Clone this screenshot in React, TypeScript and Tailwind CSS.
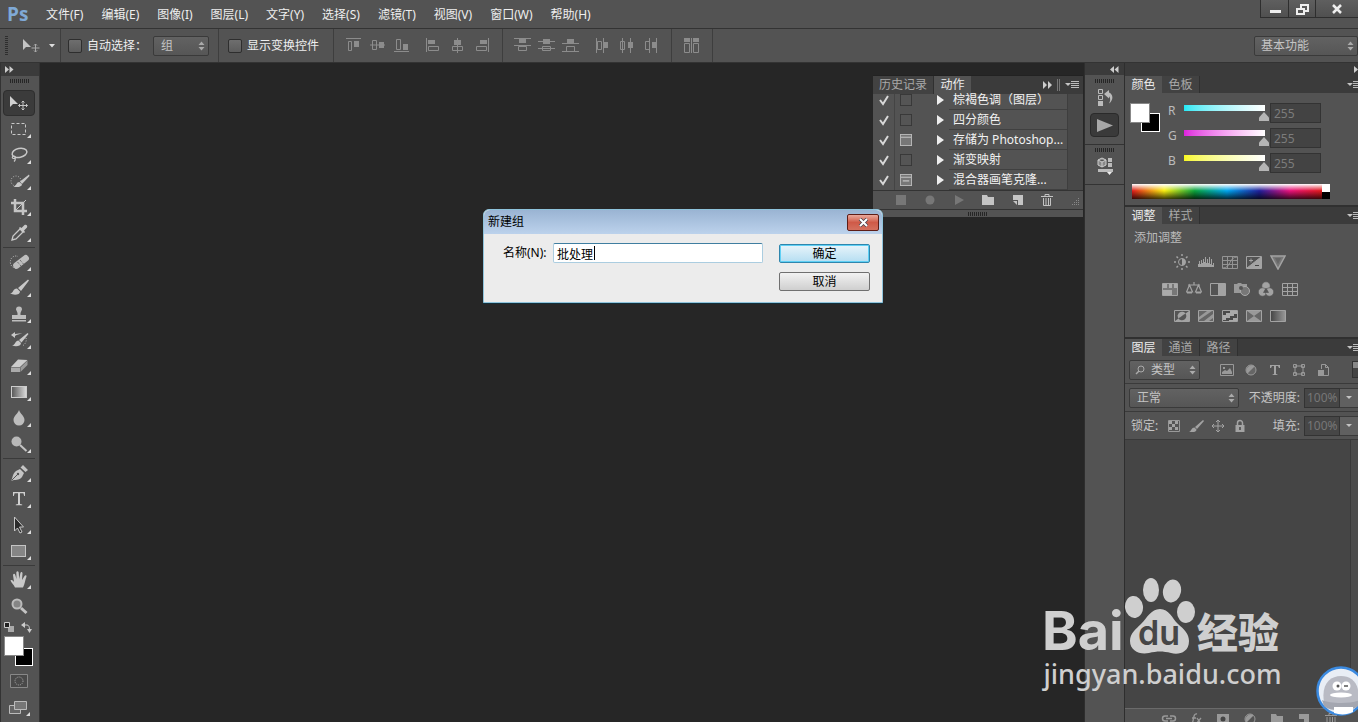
import type { ReactNode } from 'react'

const menus = [
  '文件(F)', '编辑(E)', '图像(I)', '图层(L)', '文字(Y)',
  '选择(S)', '滤镜(T)', '视图(V)', '窗口(W)', '帮助(H)',
]

const actions = [
  { name: '棕褐色调（图层）', box: 'empty' },
  { name: '四分颜色', box: 'empty' },
  { name: '存储为 Photoshop...', box: 'dialog' },
  { name: '渐变映射', box: 'empty' },
  { name: '混合器画笔克隆...', box: 'partial' },
]

const channels = [
  { name: 'R', bar: 'bg-linear-to-r from-[#1fe9f5] to-white' },
  { name: 'G', bar: 'bg-linear-to-r from-[#dd1fdd] to-white' },
  { name: 'B', bar: 'bg-linear-to-r from-[#f8f81a] to-white' },
]

type Tool = { name: string; icon: ReactNode; active?: boolean; single?: boolean }

const toolGroups: Tool[][] = [
  [
    {
      name: '移动工具',
      active: true,
      single: true,
      icon: (
        <>
          <path d="M2 4v11l3-3h5z" fill="#d0d0d0" />
          <path d="M15 9v9M10.500 13.500h9M13.500 10.500 15 9l1.500 1.500M13.500 16.500 15 18l1.500-1.500M12 12l-1.500 1.500L12 15M18 12l1.500 1.500L18 15" stroke="#c4c4c4" fill="none" />
        </>
      ),
    },
    { name: '矩形选框工具', icon: <rect x="3.500" y="5.500" width="14" height="11" fill="none" stroke="#c8c8c8" strokeDasharray="3 2" /> },
    {
      name: '套索工具',
      icon: (
        <g fill="none" stroke="#c8c8c8" strokeWidth="1.500">
          <ellipse cx="11.500" cy="9" rx="7.500" ry="4.500" transform="rotate(-12 11 9)" />
          <path d="M6 12c-2 0-2.500 2.500 0 2.500s1.500-2.500 0-2.500M6.500 14c1.500 1 .5 2.500-.5 3.500" strokeWidth="1.200" />
        </g>
      ),
    },
    {
      name: '快速选择工具',
      icon: (
        <>
          <circle cx="8" cy="11" r="5" fill="none" stroke="#bbb" strokeDasharray="1 1.500" />
          <path d="M21 4.500 12 11.500l2 2.500 7.500-8zM11.500 12c-3.500 0-2.500 3.500-6 4.500 3.500 1.500 8.500 0 8.500-2z" fill="#c8c8c8" />
        </>
      ),
    },
    { name: '裁剪工具', icon: <><path d="M7 3v12h12M3 7h12v12" fill="none" stroke="#c4c4c4" strokeWidth="2.500" /><path d="M7 15 18 4" stroke="#c4c4c4" /></> },
    {
      name: '吸管工具',
      icon: (
        <>
          <path d="m4 18 1-4 7-7 3 3-7 7z" fill="none" stroke="#c8c8c8" strokeWidth="1.300" />
          <path d="m11 6 5 5 1-1-1-1.500 3-3c1-2-1-3.500-2.500-2.500l-3 3L12 5z" fill="#c8c8c8" />
        </>
      ),
    },
  ],
  [
    {
      name: '污点修复画笔工具',
      icon: (
        <>
          <path d="M8 17a5.500 6 0 1 1 2-11.500" fill="none" stroke="#ccc" strokeDasharray="1 1.500" />
          <rect x="4" y="8" width="18" height="6.500" rx="3" transform="rotate(-38 12.500 11)" fill="#bdbdbd" />
          <path d="m9.500 11 3.500 4M12 9l3.500 4" stroke="#555" strokeDasharray="1 1" />
        </>
      ),
    },
    { name: '画笔工具', icon: <path d="M20 2.500 10 11l3 3L21 3.500zM9 11.500c-4.500 0-3 4.500-7 5 4 2 10 1.500 10-2z" fill="#c8c8c8" /> },
    { name: '仿制图章工具', icon: <path d="M9.500 10 8 6.500a3 3 0 1 1 6 0L12.500 10v2H18v4H4v-4h5.500zM4 17h14v1.500H4z" fill="#bdbdbd" /> },
    {
      name: '历史记录画笔工具',
      icon: (
        <>
          <path d="M19.500 4 11 11l2.500 2.500L20.500 5zM10.500 11.500c-3.500 0-3 4.500-6.500 5 3.500 1.500 9 1 9-2.500zM3 6l4-3v2c4-1 6-.5 7 0-3 0-5 .5-7 2v2z" fill="#c8c8c8" />
          <path d="M18 9c1 3-1 7-4 8" fill="none" stroke="#bbb" strokeDasharray="1 1.500" />
        </>
      ),
    },
    {
      name: '橡皮擦工具',
      icon: (
        <>
          <path d="M10 4.500 19.500 5 12 12H3z" fill="#cdcdcd" />
          <path d="M3 12.500h9v4.500H3z" fill="#aaa" />
          <path d="m12.500 12.500 7-7V10l-7 7z" fill="#999" />
        </>
      ),
    },
    {
      name: '渐变工具',
      icon: (
        <>
          <defs>
            <linearGradient id="tool-gradient"><stop stopColor="#555" /><stop offset="1" stopColor="#ddd" /></linearGradient>
          </defs>
          <rect x="3.500" y="5.500" width="15" height="11" fill="url(#tool-gradient)" stroke="#ccc" />
        </>
      ),
    },
    { name: '模糊工具', icon: <path d="M11 3c1 3.500 5.500 6 5.500 10a5.500 5.500 0 0 1-11 0c0-4 4.500-6.500 5.500-10z" fill="#bdbdbd" /> },
    { name: '减淡工具', icon: <><circle cx="8.500" cy="8.500" r="5" fill="#b8b8b8" /><path d="m12 12 6.500 6" stroke="#c4c4c4" strokeWidth="2" /></> },
  ],
  [
    {
      name: '钢笔工具',
      icon: (
        <>
          <path d="M3 19c2-3 1-7 5-10l4-2 4 4-2 4c-3 4-7 2-11 4zM12.500 5.500 15 3l5 5-2.500 2z" fill="#c4c4c4" />
          <path d="m3.500 18.500 6-6" stroke="#555" />
          <circle cx="10" cy="12" r="1.200" fill="#555" />
        </>
      ),
    },
    { name: '横排文字工具', icon: <path d="M5 4h12v4h-.8l-.8-2.700H12V16l2.200.6v.6H7.800v-.6L10 16V5.300H6.600L5.800 8H5z" fill="#d0d0d0" /> },
    { name: '路径选择工具', icon: <path d="M6.500 3v14l3-3 2.500 5 2-1-2.500-5h4z" fill="#2b2b2b" stroke="#c8c8c8" /> },
    { name: '矩形工具', icon: <rect x="3.500" y="5.500" width="14" height="11" fill="#858585" stroke="#c4c4c4" /> },
  ],
  [
    { name: '抓手工具', icon: <path d="M7 18.500c-1-3-4-5-4.500-7 1-1.200 2.500 0 3.500 1.500L5 6c.3-1.600 1.900-1.600 2.300 0l1.200 4-.2-6.500c.4-1.700 2-1.700 2.400 0l.5 6.500 1.200-6c.5-1.500 2.200-1.200 2.100.5L14 11l2.500-4c.9-1.300 2.200-.6 2 .6C17 11 17 15 15 18.500z" fill="#c8c8c8" /> },
    { name: '缩放工具', single: true, icon: <><circle cx="9" cy="9" r="4.500" fill="#858585" stroke="#bbb" strokeWidth="2" /><path d="m13 13 5.500 5" stroke="#c4c4c4" strokeWidth="3" /></> },
  ],
]

// each entry draws a line plus an outlined and a filled box
const alignGroups: { name: string; d: string; f: string }[][] = [
  [
    { name: '顶对齐', d: 'M1 1.500h15M3.500 4.500h3v9h-3z', f: 'M9 4h5v6H9z' },
    { name: '垂直居中对齐', d: 'M1 8h15M3.500 3.500h4v9h-4z', f: 'M10 5h5v6h-5z' },
    { name: '底对齐', d: 'M1 14.500h15M3.500 2.500h4v10h-4z', f: 'M10 7h5v6h-5z' },
  ],
  [
    { name: '左对齐', d: 'M1.500 1v14M3.500 9.500h10v4h-10z', f: 'M3 3h7v4H3z' },
    { name: '水平居中对齐', d: 'M8.500 1v15M3.500 9.500h10v4h-10z', f: 'M5 3h7v5H5z' },
    { name: '右对齐', d: 'M15.500 1v14M3.500 9.500h10v4h-10z', f: 'M7 3h7v4H7z' },
  ],
  [
    { name: '按顶分布', d: 'M0 1.500h17M0 8.500h17M4.500 9.500h8v4h-8z', f: 'M5 2h7v4H5z' },
    { name: '垂直居中分布', d: 'M0 4.500h17M0 11.500h17M4.500 9.500h8v4h-8z', f: 'M5 2h7v5H5z' },
    { name: '按底分布', d: 'M0 6.500h17M0 14.500h17M4.500 9.500h8v5h-8z', f: 'M5 2h7v4H5z' },
  ],
  [
    { name: '按左分布', d: 'M2.500 1v15M9.500 1v15M3.500 4.500h4v8h-4z', f: 'M10 5h4v6h-4z' },
    { name: '水平居中分布', d: 'M4.500 1v15M12.500 1v15M2.500 4.500h4v8h-4z', f: 'M10 5h5v6h-5z' },
    { name: '按右分布', d: 'M7.500 1v15M14.500 1v15M3.500 4.500h4v8h-4z', f: 'M10 5h4v6h-4z' },
  ],
  [{ name: '自动对齐图层', d: 'M8.500 1v15M1.500 6.500h5v9h-5zM10.500 6.500h5v9h-5z', f: 'M1 1h6v4H1zM10 1h6v4h-6z' }],
]

const adjustRows: { name: string; icon: ReactNode }[][] = [
  [
    {
      name: '亮度/对比度',
      icon: (
        <>
          <circle cx="8" cy="8" r="3.500" fill="none" stroke="#a3a3a3" />
          <path d="M8 4.500a3.500 3.500 0 0 1 0 7z" fill="#a3a3a3" />
          <path d="M8 0v2M8 14v2M0 8h2M14 8h2M2.500 2.500 4 4M12 12l1.500 1.500M13.500 2.500 12 4M4 12l-1.500 1.500" stroke="#a3a3a3" strokeWidth="1.500" />
        </>
      ),
    },
    { name: '色阶', icon: <path d="M0 13h16v-4h-1v2h-1V5h-1v5h-1V3h-1v6h-1V5H9v4H8V3H7v5H6V5H5v4H4V6H3v4H2V7H1v3H0z" fill="#a3a3a3" /> },
    { name: '曲线', icon: <path d="M.5 2.500h15v12H.5zM0 6.500h16M0 10.500h16M5.500 2v12M10.500 2v12M1 14c8 0 6-11 14-11" fill="none" stroke="#949494" /> },
    { name: '曝光度', icon: <><path d="M.5 2.500h15v12H.5z" fill="none" stroke="#a3a3a3" /><path d="M1 14 15 3v11zM3 6.500h4M5 4.500v4" fill="#a3a3a3" stroke="#a3a3a3" /><path d="M9 11.500h4" stroke="#444" /></> },
    { name: '自然饱和度', icon: <><path d="M1 2h14L8 15z" fill="#777" stroke="#a3a3a3" strokeWidth="1.500" /><path d="M5 4h6l-3 6z" fill="#666" /></> },
  ],
  [
    { name: '色相/饱和度', icon: <><path d="M.5 2.500h15v12H.5z" fill="#777" stroke="#a3a3a3" /><path d="M1 3h4v4H1zM7 3h3v4H7zM12 3h3v4h-3zM1 9h9v5H1z" fill="#aaa" /></> },
    { name: '色彩平衡', icon: <path d="M8 1v3M2 4h12M3.500 4l-3 7h6zM12.500 4l-3 7h6zM1 12h5M10 12h5" fill="none" stroke="#a3a3a3" strokeWidth="1.200" /> },
    { name: '黑白', icon: <><path d="M.5 2.500h15v12H.5z" fill="none" stroke="#a3a3a3" /><path d="M8 3h7v11H8z" fill="#a3a3a3" /></> },
    { name: '照片滤镜', icon: <><path d="M0 3h3l1-1h3l1 1h5v9H0z" fill="#999" /><circle cx="11" cy="10" r="4.500" fill="#777" stroke="#aaa" /><circle cx="7" cy="7" r="2" fill="#555" /></> },
    { name: '通道混合器', icon: <g fill="#a3a3a3" stroke="#535353" strokeWidth=".6"><circle cx="8" cy="5" r="4.200" /><circle cx="4.500" cy="11" r="4.200" /><circle cx="11.500" cy="11" r="4.200" /><path d="m8 7-2.500 4.500h5z" fill="#555" /></g> },
    { name: '颜色查找', icon: <path d="M.5 2.500h15v12H.5zM0 6.500h16M0 10.500h16M5.500 2v12M10.500 2v12" fill="none" stroke="#a3a3a3" /> },
  ],
  [
    { name: '反相', icon: <><path d="M.5 2.500h15v11H.5z" fill="#555" stroke="#a3a3a3" /><path d="M1 13 15 3v10z" fill="#a3a3a3" /><path d="M4.500 10.500a4 4 0 0 1 7-5z" fill="#a3a3a3" /><path d="M4.500 10.500a4 4 0 0 0 7-5z" fill="#555" /></> },
    { name: '色调分离', icon: <><path d="M.5 2.500h15v11H.5z" fill="#666" stroke="#a3a3a3" /><path d="M1 9 9 3h5L1 12zM6 13l9-7v4l-4 3z" fill="#999" /></> },
    { name: '阈值', icon: <><path d="M.5 2.500h15v11H.5z" fill="#4a4a4a" stroke="#a3a3a3" /><path d="M1 7h3V5h4V3h7v3h-3v2H8v2H4v2H1zM7 13v-1h4v-2h4v3z" fill="#aaa" /></> },
    { name: '可选颜色', icon: <><path d="M.5 2.500h15v11H.5z" fill="#666" stroke="#a3a3a3" /><path d="M1 3h14L8 8zM1 13h14L8 8z" fill="#999" /></> },
    {
      name: '渐变映射',
      icon: (
        <>
          <defs>
            <linearGradient id="map-gradient"><stop stopColor="#444" /><stop offset="1" stopColor="#999" /></linearGradient>
          </defs>
          <path d="M.5 2.500h15v11H.5z" fill="url(#map-gradient)" stroke="#a3a3a3" />
        </>
      ),
    },
  ],
]

const filters = [
  { name: '像素图层', icon: <><path d="M1.500 2.500h13v11h-13z" fill="none" stroke="#999" /><path d="M3 12v-2l3-2 2 1 3-3 2 4v2zM4 5h2v2H4z" fill="#999" /></> },
  { name: '调整图层', icon: <><circle cx="8" cy="8" r="5" fill="#666" stroke="#999" /><path d="M4.500 11.500a5 5 0 0 1 7-7z" fill="#999" /></> },
  { name: '文字图层', icon: <path d="M3 3h10v3h-1l-1-2H9v8l1.500.5v.5h-5v-.5L7 12V4H5L4 6H3z" fill="#a3a3a3" /> },
  { name: '形状图层', icon: <path d="M4 4h8v8H4zM2.500 2.500h3v3h-3zM10.500 2.500h3v3h-3zM2.500 10.500h3v3h-3zM10.500 10.500h3v3h-3z" fill="#535353" stroke="#999" /> },
  { name: '智能对象', icon: <><path d="M6.500 7V2.500h4l3 3v8H9M10.500 2.500v3h3" fill="none" stroke="#999" /><path d="M3 8h6v6H3z" fill="#999" /></> },
]

const locks = [
  { name: '锁定透明像素', icon: <><path d="M2.500 2.500h11v11h-11z" fill="#555" stroke="#999" /><path d="M3 3h3v3H3zM9 3h3v3H9zM6 6h3v3H6zM3 9h3v3H3zM9 9h3v3H9z" fill="#a3a3a3" /></> },
  { name: '锁定图像像素', icon: <path d="M15 2 7 9l2 2 7-8zM6.500 9.500C3 9.500 4 13 1 13.500c3 1 7.500 1 7.500-2z" fill="#a3a3a3" /> },
  { name: '锁定位置', icon: <path d="M8 2v12M2 8h12M6 4l2-2 2 2M6 12l2 2 2-2M4 6 2 8l2 2M12 6l2 2-2 2" fill="none" stroke="#a3a3a3" /> },
  { name: '锁定全部', icon: <><path d="M3.500 7h9v7h-9z" fill="#a3a3a3" /><path d="M5.500 7V5a2.500 2.500 0 0 1 5 0v2" fill="none" stroke="#a3a3a3" strokeWidth="1.500" /><path d="M8 9v3" stroke="#444" strokeWidth="1.500" /></> },
]

const layerButtons = [
  { name: '链接图层', icon: <path d="M7 5H4a2.500 2.500 0 0 0 0 5h3M9 5h3a2.500 2.500 0 0 1 0 5H9M5 7.500h6" fill="none" stroke="#999" strokeWidth="1.500" /> },
  { name: '添加图层样式', icon: <path d="M9 3c-4-1-3 6-5 10M4 7h4M9 7l4 6M13 7l-5 6" fill="none" stroke="#999" strokeWidth="1.300" /> },
  { name: '添加蒙版', icon: <><path d="M2 3h12v10H2z" fill="#999" /><circle cx="8" cy="8" r="2.500" fill="#444" /></> },
  { name: '新建调整图层', icon: <><circle cx="8" cy="8" r="5" fill="none" stroke="#999" /><path d="M4.500 11.500a5 5 0 0 1 7-7z" fill="#999" /></> },
  { name: '新建组', icon: <path d="M2 3h5l1 2h6v8H2z" fill="#999" /> },
  { name: '新建图层', icon: <path d="M3 3h10v10H8V8H3z" fill="#999" /> },
  { name: '删除图层', icon: <path d="M2 4.500h12M6 4V2.500h4V4M4 6v8h8V6M7 6v7M9.500 6v7" fill="none" stroke="#999" /> },
]

const actionButtons = [
  { name: '停止', icon: <path d="M3 3h10v10H3z" fill="#777" /> },
  { name: '开始记录', icon: <circle cx="8" cy="8" r="4.500" fill="#777" /> },
  { name: '播放', icon: <path d="m4 3 9 5-9 5z" fill="#777" /> },
  { name: '新建动作组', icon: <path d="M2 3h5l1 2h6v8H2z" fill="#c4c4c4" /> },
  { name: '新建动作', icon: <path d="M4 3h10v10H9V8H4zM4 9h4v4z" fill="#c4c4c4" /> },
  { name: '删除动作', icon: <path d="M3 4.500h12M7 4V2.500h4V4M5.500 6v7.500h7V6M8 6v7M10.500 6v7" fill="none" stroke="#c4c4c4" /> },
]

function Icon({ children, className = 'size-4', box = '0 0 16 16' }: { children: ReactNode; className?: string; box?: string }) {
  return <svg viewBox={box} className={`block shrink-0 ${className}`} aria-hidden="true">{children}</svg>
}

function Grip() {
  return <div className="h-1 w-5 shrink-0 bg-[repeating-linear-gradient(90deg,#262626_0_1px,transparent_1px_2px)]" />
}

function PanelMenu() {
  return (
    <Icon className="h-3 w-4" box="0 0 16 12">
      <path d="M1 4h6L4 7z" fill="#c4c4c4" />
      <path d="M7 2.500h8M7 4.500h8M7 6.500h8M7 8.500h8" stroke="#bbb" />
    </Icon>
  )
}

function Dropdown({ label, value, className, textClass }: { label: string; value: string; className: string; textClass: string }) {
  return (
    <div className={`relative h-5 shrink-0 ${className}`}>
      <select aria-label={label} className={`block h-full w-full appearance-none rounded-xs border border-[#3a3a3a] bg-linear-to-b from-[#626262] to-[#565656] text-xs leading-4 text-[#c4c4c4] ${textClass}`}>
        <option>{value}</option>
      </select>
      <svg viewBox="0 0 7 10" className="pointer-events-none absolute top-[5px] right-1 h-[10px] w-[7px]" aria-hidden="true">
        <path d="M.5 4h6l-3-3.500zM.5 6h6l-3 3.500z" fill="#aaa" />
      </svg>
    </div>
  )
}

function PanelTabs({ tabs }: { tabs: string[] }) {
  return (
    <div className="flex h-[17px] shrink-0 bg-[#3b3b3b]">
      {tabs.map((tab, i) => (
        <button
          key={tab}
          className={
            i === 0
              ? 'w-[37px] bg-[#535353] text-xs leading-4 text-[#ececec]'
              : 'w-[38px] border-r border-[#303030] bg-[#424242] text-xs leading-4 text-[#a8a8a8]'
          }
        >
          {tab}
        </button>
      ))}
      <button aria-label="面板菜单" className="-mr-1 ml-auto flex items-center"><PanelMenu /></button>
    </div>
  )
}

function Percent({ label }: { label: string }) {
  return (
    <>
      <label htmlFor={label} className="ml-auto text-xs leading-5 text-[#c4c4c4]">{label}:</label>
      <input id={label} defaultValue="100%" className="ml-1 h-5 w-9 shrink-0 border border-[#333] bg-[#464646] pl-[2px] text-xs text-[#777]" />
      <button aria-label={`${label}滑块`} className="flex h-5 w-[18px] shrink-0 items-center justify-center border-y border-[#3a3a3a] bg-[#606060]">
        <Icon className="h-1 w-2" box="0 0 8 4"><path d="M1 0h6L4 3z" fill="#c4c4c4" /></Icon>
      </button>
    </>
  )
}

function MenuBar() {
  return (
    <header className="flex h-7 shrink-0 items-center bg-[#535353] pl-[7px]">
      <span className="w-[39px] font-['Open_Sans',sans-serif] text-[19px] leading-6 font-bold text-[#7fa9d6]">Ps</span>
      <nav className="flex gap-[18px] pt-[2px]">
        {menus.map((m) => (
          <button key={m} className="text-xs leading-5 whitespace-nowrap text-[#eee]">{m}</button>
        ))}
      </nav>
      <div className="ml-auto flex h-[18px] self-start border-b border-l border-[#2e2e2e] bg-linear-to-b from-[#5f5f5f] to-[#505050]">
        <button aria-label="最小化" className="flex w-7 items-center justify-center border-r border-[#2e2e2e]">
          <Icon className="size-3" box="0 0 12 12"><path d="M1 7h11v3H1z" fill="#eee" /></Icon>
        </button>
        <button aria-label="还原" className="flex w-[27px] items-center justify-center border-r border-[#2e2e2e]">
          <Icon className="h-3 w-[13px]" box="0 0 13 12"><path d="M5 6V2h7v6H8M1 6h7v5H1z" fill="none" stroke="#eee" strokeWidth="2" /></Icon>
        </button>
        <button aria-label="关闭" className="flex w-[42px] items-center justify-center">
          <Icon className="h-[10px] w-3" box="0 0 12 10"><path d="m2 1 8 8M10 1 2 9" stroke="#eee" strokeWidth="2.500" /></Icon>
        </button>
      </div>
    </header>
  )
}

function OptionsBar() {
  const checkbox = 'size-[14px] shrink-0 appearance-none rounded-xs border border-[#2e2e2e] bg-linear-to-b from-[#6e6e6e] to-[#5c5c5c]'
  return (
    <div className="flex h-[35px] shrink-0 items-center border-t border-b border-[#333] bg-[#535353]">
      <div className="ml-[5px] h-5 w-[3px] bg-[repeating-linear-gradient(180deg,#2e2e2e_0_1px,transparent_1px_2px)]" />
      <button aria-label="移动工具预设" className="ml-3 flex w-9 items-center">
        <Icon className="size-[22px]" box="0 0 22 22">
          <path d="M3 4v11l3-3h5z" fill="#c4c4c4" />
          <path d="M15.500 9v8M11.500 13h8M14 10.500 15.500 9l1.500 1.500M14 15.500l1.500 1.500 1.500-1.500" stroke="#aaa" fill="none" />
        </Icon>
        <Icon className="ml-auto h-1 w-2" box="0 0 8 4"><path d="M1 0h6L4 3.500z" fill="#ddd" /></Icon>
      </button>
      <div className="ml-1 h-full w-px bg-[#3e3e3e]" />
      <label className="ml-[7px] flex w-[85px] items-center gap-[5px] text-xs leading-5 whitespace-nowrap text-[#eee]">
        <input type="checkbox" className={checkbox} />自动选择：
      </label>
      <Dropdown label="自动选择对象" value="组" className="w-14" textClass="pl-[7px]" />
      <div className="ml-[9px] h-full w-px bg-[#3e3e3e]" />
      <label className="ml-[9px] flex w-[105px] items-center gap-[5px] text-xs leading-5 whitespace-nowrap text-[#eee]">
        <input type="checkbox" className={checkbox} />显示变换控件
      </label>
      <div className="h-full w-px bg-[#3e3e3e]" />
      {alignGroups.map((group, i) => (
        <div key={i} className={`flex h-full items-center pl-[7px] ${i === 1 || i === 3 || i === 4 ? 'border-r border-[#3e3e3e] pr-[9px]' : 'pr-px'}`}>
          {group.map((a) => (
            <button key={a.name} aria-label={a.name} className="flex w-6 justify-center">
              <Icon className="size-[17px]" box="0 0 17 17">
                <path d={a.d} fill="none" stroke="#8c8c8c" />
                <path d={a.f} fill="#8c8c8c" />
              </Icon>
            </button>
          ))}
        </div>
      ))}
      <div className="ml-auto">
        <Dropdown label="工作区" value="基本功能" className="w-[104px]" textClass="pl-[6px]" />
      </div>
    </div>
  )
}

function Toolbar() {
  return (
    <aside className="flex w-10 shrink-0 flex-col border-x border-[#333] bg-[#535353]">
      <div className="flex h-[13px] shrink-0 items-center bg-[#3b3b3b] pl-1">
        <Icon className="h-[7px] w-[9px]" box="0 0 9 7"><path d="m0 0 4 3.500L0 7zM4.500 0l4 3.500-4 3.500z" fill="#ccc" /></Icon>
      </div>
      <div className="flex h-[14px] shrink-0 justify-center pt-[3px]"><Grip /></div>
      {toolGroups.map((group, i) => (
        <div key={i} className={`mr-1 ml-[2px] shrink-0 ${i > 0 ? 'mt-px border-t border-[#3a3a3a] pt-px' : ''}`}>
          {group.map((tool) => (
            <button
              key={tool.name}
              aria-label={tool.name}
              className={`relative flex h-[26px] w-full items-center justify-center ${tool.active ? 'rounded-sm border border-[#2e2e2e] bg-[#3b3b3b]' : ''}`}
            >
              <Icon className="size-[22px]" box="0 0 22 22">{tool.icon}</Icon>
              {!tool.single && (
                <svg viewBox="0 0 4 4" className="absolute right-1 bottom-1 size-1" aria-hidden="true"><path d="M4 0v4H0z" fill="#ddd" /></svg>
              )}
            </button>
          ))}
        </div>
      ))}
      <div className="flex h-4 shrink-0 items-center justify-between px-[3px]">
        <Icon className="size-[10px]" box="0 0 10 10"><path d="M4 4h6v6H4z" fill="#aaa" /><path d="M.5.5h5v5h-5z" fill="#222" stroke="#ccc" /></Icon>
        <Icon className="mr-1 size-[11px]" box="0 0 11 11"><path d="M4 0v6L0 3zM6 7h5l-2.500 4z" fill="#ccc" /><path d="M3 3h3q2.500 0 2.500 5" fill="none" stroke="#ccc" /></Icon>
      </div>
      <div className="relative mx-[3px] mt-px h-[30px] shrink-0">
        <button aria-label="背景色" className="absolute right-[3px] bottom-0 size-[18px] border border-white bg-black" />
        <button aria-label="前景色" className="absolute top-0 left-0 size-5 border border-[#888] bg-white" />
      </div>
      <button aria-label="以快速蒙版模式编辑" className="mt-[6px] mr-1 ml-[2px] flex h-[18px] shrink-0 items-center justify-center">
        <Icon className="h-[14px] w-[18px]" box="0 0 18 14">
          <path d="M.5.5h17v13H.5z" fill="#494949" stroke="#888" />
          <circle cx="9" cy="7" r="4" fill="none" stroke="#aaa" strokeDasharray="1 1" />
        </Icon>
      </button>
      <button aria-label="更改屏幕模式" className="mt-2 mr-1 ml-[2px] flex h-5 shrink-0 items-center justify-center">
        <Icon className="h-4 w-[22px]" box="0 0 22 16">
          <path d="M1.500 5.500h11v8h-11z" fill="#666" stroke="#bbb" />
          <path d="M6.500 1.500h12v8h-12z" fill="#777" stroke="#bbb" />
          <path d="M22 12v4h-4z" fill="#ddd" />
        </Icon>
      </button>
    </aside>
  )
}

function ActionsPanel() {
  return (
    <section className="absolute top-3 right-px w-[210px] border-t border-[#222] bg-[#535353]">
      <div className="flex h-[18px] items-center bg-[#3b3b3b] text-xs leading-4">
        <button className="h-full w-[61px] border-r border-[#303030] bg-[#424242] text-[#a8a8a8]">历史记录</button>
        <button className="h-full w-[37px] bg-[#535353] text-[#ececec]">动作</button>
        <Icon className="ml-auto h-2 w-[10px]" box="0 0 10 8"><path d="m0 0 4 4-4 4zM5 0l4 4-4 4z" fill="#ccc" /></Icon>
        <div className="mx-1 h-3 w-[3px] border-x border-[#777]" />
        <button aria-label="面板菜单" className="pr-[3px]"><PanelMenu /></button>
      </div>
      <div className="flex h-[97px] border-b border-[#333]">
        <ul className="w-[194px]">
          {actions.map((a, i) => {
            // the list is scrolled, so the first row is shorter than the rest
            const pad = i === 0 ? 'pb-1' : ''
            return (
              <li key={a.name} className={`flex ${i === 0 ? 'h-4' : 'h-5'}`}>
                <span className={`flex w-[22px] items-center justify-center border-r border-[#444] ${pad}`}>
                  <Icon className="size-3" box="0 0 12 12"><path d="m2 6 3 4 5-8" fill="none" stroke="#d8d8d8" strokeWidth="2" /></Icon>
                </span>
                <span className={`flex w-[22px] items-center justify-center ${pad}`}>
                  <Icon className="size-3" box="0 0 13 13">
                    <rect x=".5" y=".5" width="12" height="12" fill={a.box === 'empty' ? '#555' : '#777'} stroke={a.box === 'empty' ? '#383838' : '#bbb'} />
                    {a.box !== 'empty' && <path d="M1 3.500h11" stroke="#ccc" />}
                    {a.box === 'partial' && <path d="M3 7.500h7" stroke="#ddd" />}
                  </Icon>
                </span>
                <span className={`ml-5 flex items-center ${pad}`}>
                  <Icon className="h-[10px] w-[7px]" box="0 0 7 10"><path d="m0 0 7 5-7 5z" fill="#eee" /></Icon>
                </span>
                <span className={`ml-[5px] flex-1 border-b border-[#404040] pl-1 text-xs whitespace-nowrap text-[#f2f2f2] ${i === 0 ? 'leading-3' : 'leading-5'}`}>{a.name}</span>
              </li>
            )
          })}
        </ul>
        <div className="flex-1 border-l border-[#3e3e3e] bg-[#484848]" />
      </div>
      <div className="relative flex h-[18px] items-center gap-[13px] pl-5">
        {actionButtons.map((b) => (
          <button key={b.name} aria-label={b.name}><Icon>{b.icon}</Icon></button>
        ))}
        <svg viewBox="0 0 8 8" className="absolute right-1 bottom-1 size-2" aria-hidden="true">
          <path d="M1 7.500h7M3 5.500h5M5 3.500h3M7 1.500h1" stroke="#888" strokeDasharray="1 1" />
        </svg>
      </div>
      <div className="flex h-2 items-center justify-center border-t border-[#333]"><Grip /></div>
    </section>
  )
}

function NewSetDialog() {
  const button = 'h-[19px] w-[91px] rounded-xs pt-px text-xs leading-4 text-black'
  return (
    <form
      role="dialog"
      aria-label="新建组"
      className="absolute top-[146px] left-[443px] h-[94px] w-[400px] rounded-t-md border border-[#8fc4dc] bg-[#ececec] shadow-[0_1px_0_#12303c]"
    >
      <div className="flex h-6 items-center justify-between rounded-t-md bg-linear-to-b from-[#9ab4d3] to-[#bcd2ec] pr-[3px] pl-1">
        <h2 className="text-xs leading-5 text-black">新建组</h2>
        <button type="button" aria-label="关闭" className="flex h-[17px] w-8 items-center justify-center rounded-xs border border-[#5e1d17] bg-linear-to-b from-[#e9a89c] via-[#cf5a48] to-[#d4705e]">
          <Icon className="h-[9px] w-[11px]" box="0 0 11 9"><path d="m2 1 7 7M9 1 2 8" stroke="#45424f" strokeWidth="3.500" /><path d="m2 1 7 7M9 1 2 8" stroke="#fff" strokeWidth="2" /></Icon>
        </button>
      </div>
      <div className="flex items-start pt-[9px] pl-[19px]">
        <label htmlFor="set-name" className="w-[50px] text-xs leading-5 whitespace-nowrap text-black">名称(N):</label>
        <div className="relative">
          <input id="set-name" defaultValue="批处理" className="block h-5 w-[210px] rounded-xs border border-[#abcde0] border-t-[#3f7ea0] bg-white px-[3px] pt-px text-xs text-black caret-transparent outline-none" />
          <span className="absolute top-[3px] left-[41px] h-[14px] w-px bg-black" />
        </div>
        <div className="ml-4 flex flex-col gap-[9px] pt-px">
          <button type="submit" className={`${button} border border-[#2f86ad] bg-linear-to-b from-[#e8f4fa] to-[#b5def2] shadow-[inset_0_0_0_1px_#5fd0f5]`}>确定</button>
          <button type="button" className={`${button} border border-[#707070] bg-linear-to-b from-[#f2f2f2] to-[#cfcfcf]`}>取消</button>
        </div>
      </div>
    </form>
  )
}

function IconDock() {
  return (
    <aside className="w-[41px] shrink-0 border-x border-[#2e2e2e] bg-[#535353]">
      <div className="flex h-3 items-center justify-end bg-[#3b3b3b] pr-[5px]">
        <Icon className="h-[7px] w-[9px]" box="0 0 9 7"><path d="M4 0 0 3.500 4 7zM8.500 0l-4 3.500 4 3.500z" fill="#ccc" /></Icon>
      </div>
      <div className="flex h-[70px] flex-col items-center gap-px border-b border-[#333] pt-1">
        <Grip />
        <button aria-label="历史记录" className="p-1">
          <Icon className="h-5 w-4" box="0 0 16 20">
            <path d="M1.500 1.500h4v4h-4zM1.500 7.500h4v4h-4z" fill="none" stroke="#bbb" />
            <path d="M1 13h5v5H1zM7 6l5-4v2.500c4 1.500 5 7 0 11 2-4 1-6.500 0-7v2z" fill="#bbb" />
          </Icon>
        </button>
        <button aria-label="动作" className="flex h-6 w-[29px] shrink-0 items-center justify-center rounded-sm border border-[#2a2a2a] bg-[#3a3a3a]">
          <Icon className="h-[13px] w-4" box="0 0 16 13"><path d="m0 0 16 6.500L0 13z" fill="#a8a8a8" /></Icon>
        </button>
      </div>
      <div className="flex h-10 flex-col items-center border-b border-[#333] pt-[3px]">
        <Grip />
        <button aria-label="属性" className="p-[5px]">
          <Icon className="h-[18px] w-4" box="0 0 16 18">
            <path d="m5 1 4 2v5l-4 2-4-2V3zM1 3l4 2 4-2M5 5v5" fill="#888" stroke="#ccc" />
            <path d="M11 1h4v4h-4zM11 6h4v4h-4zM1 12h15v3H1z" fill="#bbb" />
            <path d="M10 15h5l-2.500 3z" fill="#eee" />
          </Icon>
        </button>
      </div>
    </aside>
  )
}

function ColorPanel() {
  return (
    <section className="h-[129px] shrink-0">
      <PanelTabs tabs={['颜色', '色板']} />
      <div className="flex pt-[10px] pl-[5px]">
        <div className="relative h-[30px] w-[38px]">
          <button aria-label="背景色" className="absolute top-[10px] left-[11px] size-[19px] border border-white bg-black" />
          <button aria-label="前景色" className="absolute top-0 left-0 size-5 border border-[#888] bg-white" />
        </div>
        <div className="flex flex-col gap-1">
          {channels.map((c) => (
            <div key={c.name} className="flex h-[21px]">
              <label htmlFor={`range-${c.name}`} className="w-3 text-xs leading-4 text-[#bbb]">{c.name}</label>
              <div className="mt-[2px] w-[89px]">
                <div className={`mx-1 h-[6px] ${c.bar}`} />
                <input
                  id={`range-${c.name}`}
                  type="range"
                  min={0}
                  max={255}
                  defaultValue={255}
                  className="mt-px block h-[9px] w-full appearance-none bg-transparent [&::-webkit-slider-thumb]:h-[9px] [&::-webkit-slider-thumb]:w-[10px] [&::-webkit-slider-thumb]:appearance-none [&::-webkit-slider-thumb]:bg-[#b5b5b5] [&::-webkit-slider-thumb]:[clip-path:polygon(50%_0,100%_60%,100%_100%,0_100%,0_60%)]"
                />
              </div>
              <input aria-label={`${c.name} 值`} defaultValue="255" className="ml-px h-5 w-[51px] border border-[#333] bg-[#434343] px-[3px] text-xs text-[#7c7c7c]" />
            </div>
          ))}
        </div>
      </div>
      <div className="mt-[10px] ml-[7px] flex h-[15px] w-[198px]">
        <div className="flex-1 bg-[linear-gradient(180deg,#fff_0%,transparent_45%,rgba(0,0,0,0.75)_100%),linear-gradient(90deg,#e01b1b_0%,#f8ee10_17%,#0aa33c_33%,#00a5ee_50%,#20209a_67%,#e8127c_83%,#e01b1b_100%)]" />
        <div className="w-2 bg-linear-to-b from-white from-50% to-black to-50%" />
      </div>
    </section>
  )
}

function AdjustPanel() {
  return (
    <section className="h-[132px] shrink-0 border-t-2 border-[#303030]">
      <PanelTabs tabs={['调整', '样式']} />
      <p className="px-[9px] pt-1 text-xs leading-5 text-[#bbb]">添加调整</p>
      <div className="mt-[6px] flex w-[210px] flex-col gap-[11px]">
        {adjustRows.map((row, i) => (
          <div key={i} className="flex justify-center gap-2">
            {row.map((a) => (
              <button key={a.name} aria-label={a.name}><Icon>{a.icon}</Icon></button>
            ))}
          </div>
        ))}
      </div>
    </section>
  )
}

function LayersPanel() {
  return (
    <section className="flex min-h-0 flex-1 flex-col border-t-2 border-[#303030]">
      <PanelTabs tabs={['图层', '通道', '路径']} />
      <div className="flex h-7 shrink-0 items-center border-b border-[#3a3a3a] pl-1">
        <div className="relative">
          <Dropdown label="图层过滤" value="类型" className="w-[71px]" textClass="pl-[21px]" />
          <svg viewBox="0 0 10 10" className="absolute top-[5px] left-[6px] size-[10px]" aria-hidden="true">
            <circle cx="6" cy="4" r="3" fill="none" stroke="#aaa" /><path d="M4 6 1 9" stroke="#aaa" strokeWidth="1.500" />
          </svg>
        </div>
        <div className="ml-[19px] flex gap-2">
          {filters.map((f) => (
            <button key={f.name} aria-label={f.name}><Icon>{f.icon}</Icon></button>
          ))}
        </div>
        <button aria-label="打开或关闭图层过滤" className="ml-auto h-[17px] w-[6px] border border-r-0 border-[#333] bg-linear-to-b from-[#888] from-40% to-[#444] to-40%" />
      </div>
      <div className="flex h-7 shrink-0 items-center border-b border-[#3a3a3a] pl-1">
        <Dropdown label="混合模式" value="正常" className="w-[110px]" textClass="pl-[7px]" />
        <Percent label="不透明度" />
      </div>
      <div className="flex h-7 shrink-0 items-center border-b border-[#3a3a3a] pl-[6px]">
        <span className="text-xs leading-5 text-[#c4c4c4]">锁定:</span>
        <div className="ml-2 flex gap-[6px]">
          {locks.map((l) => (
            <button key={l.name} aria-label={l.name}><Icon>{l.icon}</Icon></button>
          ))}
        </div>
        <Percent label="填充" />
      </div>
      <div className="flex min-h-0 flex-1 bg-[#454545]">
        <div className="ml-auto w-2 border-l border-[#3a3a3a] bg-[#4c4c4c]" />
      </div>
      <div className="flex h-[14px] shrink-0 gap-[11px] overflow-hidden border-t border-[#6a6a6a] pt-[2px] pl-9">
        {layerButtons.map((b) => (
          <button key={b.name} aria-label={b.name} className="h-4"><Icon>{b.icon}</Icon></button>
        ))}
      </div>
    </section>
  )
}

function Watermark() {
  return (
    <div className="pointer-events-none absolute right-[75px] bottom-7 w-[241px] text-[#cfcfcf]">
      <div className="flex h-[76px] items-end">
        <span className="w-[82px] font-[Inter,sans-serif] text-[54px] leading-[46px] font-bold">Bai</span>
        <div className="relative h-[76px] w-[71px] shrink-0">
          <svg viewBox="0 0 71 76" className="h-full w-full" aria-hidden="true" fill="#cfcfcf">
            <ellipse cx="10" cy="29" rx="9" ry="11" transform="rotate(-8 10 29)" />
            <ellipse cx="27" cy="12" rx="8" ry="12" />
            <ellipse cx="48" cy="13" rx="9" ry="11.500" transform="rotate(12 48 13)" />
            <ellipse cx="62" cy="34" rx="9" ry="11" />
            <path d="M36 31c9 0 12 9 18 15 6 5 11 10 11 17 0 12-11 14-18 12-8-2-14-2-22 0-9 2-19-2-19-12 0-8 6-12 11-17 6-6 10-15 19-15z" />
          </svg>
          <span className="absolute top-[39px] left-[14px] font-[Inter,sans-serif] text-[34px] leading-8 font-semibold text-[#464646]">du</span>
        </div>
        <span className="ml-[2px] text-[41px] leading-[44px] font-black whitespace-nowrap">经验</span>
      </div>
      <p className="text-center font-['Noto_Sans',sans-serif] text-[27px] leading-10 font-medium whitespace-nowrap">jingyan.baidu.com</p>
    </div>
  )
}

function Assistant() {
  return (
    <button aria-label="助手" className="absolute -right-2 bottom-[6px] size-[50px]">
      <svg viewBox="0 0 50 50" className="h-full w-full" aria-hidden="true">
        <circle cx="25" cy="25" r="23.500" fill="#e9eef5" stroke="#3b8ae0" strokeWidth="2.500" />
        <path d="M8 36C5 18 14 10 25 10s20 8 17 26c-8 6-26 6-34 0z" fill="#b9bbc4" />
        <path d="M6 34c8 4 30 4 38 0l-2 6c-6 6-28 6-34 0z" fill="#a3a6b0" />
        <path d="M18 41h19v5c-6 3-13 3-19 1z" fill="#fff" />
        <circle cx="21" cy="20" r="4.500" fill="#fff" />
        <circle cx="30" cy="20" r="4.500" fill="#fff" />
        <circle cx="22" cy="20" r="1.500" fill="#555" />
        <path d="M28 20h4" stroke="#555" strokeWidth="1.500" />
        <ellipse cx="25" cy="29" rx="11" ry="2.500" fill="#fff" />
      </svg>
    </button>
  )
}

export default function App() {
  return (
    <div className="relative flex h-screen flex-col overflow-hidden bg-[#262626] font-['Noto_Sans','Noto_Sans_CJK_SC',sans-serif]">
      <MenuBar />
      <OptionsBar />
      <div className="flex min-h-0 flex-1">
        <Toolbar />
        <main className="relative min-w-0 flex-1 bg-[#262626]">
          <ActionsPanel />
          <NewSetDialog />
        </main>
        <IconDock />
        <aside className="flex w-[233px] shrink-0 flex-col overflow-hidden bg-[#535353]">
          <div className="flex h-[13px] shrink-0 items-center justify-end bg-[#3b3b3b]">
            <Icon className="h-[7px] w-1" box="0 0 4 7"><path d="m0 0 4 3.500L0 7z" fill="#ccc" /></Icon>
          </div>
          <ColorPanel />
          <AdjustPanel />
          <LayersPanel />
        </aside>
      </div>
      <Watermark />
      <Assistant />
    </div>
  )
}
